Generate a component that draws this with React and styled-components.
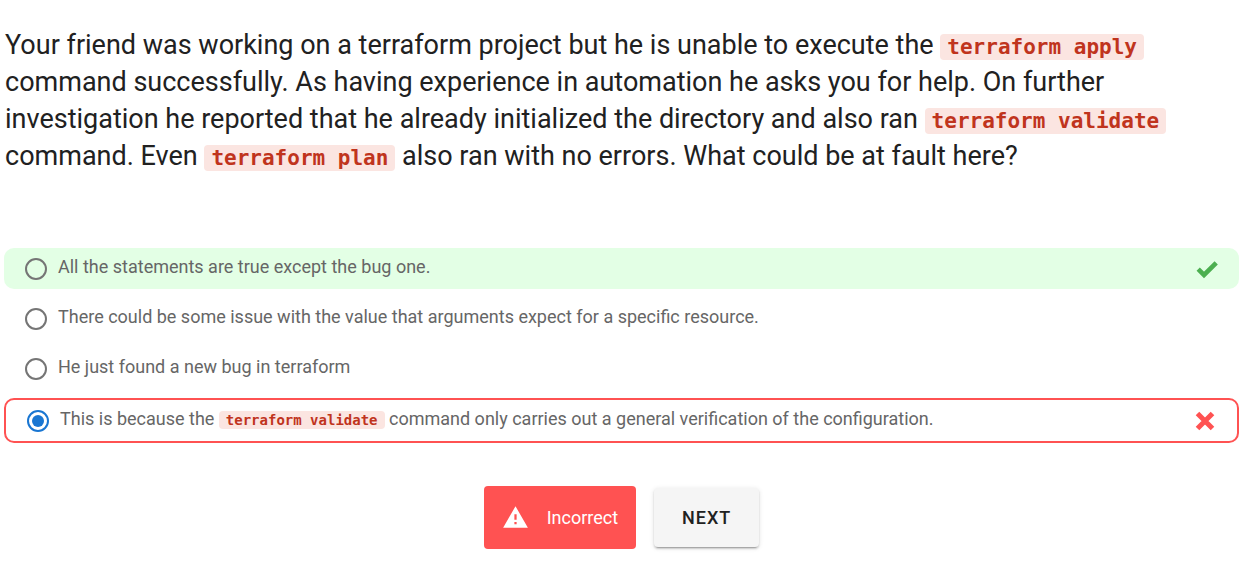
import React, { useState } from "react";
import styled, { createGlobalStyle } from "styled-components";

const GlobalStyle = createGlobalStyle`
  *, *::before, *::after { box-sizing: border-box; }
  body {
    margin: 0;
    background: #fff;
    color: #212121;
    font-family: Roboto, "Liberation Sans", sans-serif;
  }
`;

const Page = styled.main`
  padding: 27px 12px 32px 4px;
`;

const Question = styled.h1`
  margin: 0 0 73px;
  padding: 0 48px 0 1px;
  font-size: 27px;
  font-weight: 400;
  line-height: 37px;
`;

const Code = styled.code`
  padding: 1px 7px;
  border-radius: 4px;
  background: #fbe5e1;
  color: #c0341d;
  font-family: "DejaVu Sans Mono", monospace;
  font-size: ${(p) => (p.$small ? "14px" : "21px")};
  font-weight: 700;
  line-height: 1;
`;

const Options = styled.fieldset`
  display: flex;
  flex-direction: column;
  gap: 9px;
  margin: 0;
  padding: 0;
  border: 0;
`;

const Option = styled.label`
  display: flex;
  align-items: center;
  gap: 11px;
  min-height: 41px;
  padding: 0 21px;
  border-radius: 10px;
  color: #666;
  font-size: 18px;
  line-height: 24px;
  background: ${(p) => (p.$state === "correct" ? "#e3ffe5" : "transparent")};
  ${(p) => p.$state === "wrong" && "border: 2px solid #ff5252; min-height: 45px;"}
`;

const Radio = styled.input`
  appearance: none;
  flex: none;
  display: grid;
  place-content: center;
  width: 22px;
  height: 22px;
  margin: 0;
  border: 2px solid #757575;
  border-radius: 50%;
  &:checked { border-color: #1976d2; }
  &:checked::before {
    content: "";
    width: 12px;
    height: 12px;
    border-radius: 50%;
    background: #1976d2;
  }
`;

const OptionText = styled.span`
  flex: 1;
  padding-bottom: 4px;
`;

const Mark = styled.svg`
  flex: none;
  width: 22px;
  height: 22px;
`;

const Actions = styled.div`
  display: flex;
  justify-content: center;
  align-items: center;
  gap: 18px;
  margin-top: 43px;
`;

const Result = styled.div`
  display: flex;
  align-items: center;
  gap: 18px;
  height: 63px;
  padding: 0 18px;
  border-radius: 4px;
  background: #ff5252;
  color: #fff;
  font-size: 18px;
`;

const WarningIcon = styled.svg`
  width: 27px;
  height: 27px;
`;

const NextButton = styled.button`
  height: 59px;
  padding: 0 28px;
  border: 0;
  border-radius: 4px;
  background: #f5f5f5;
  color: #212121;
  font-family: inherit;
  font-size: 18px;
  font-weight: 500;
  letter-spacing: 1px;
  text-transform: uppercase;
  box-shadow: 0 3px 1px -2px rgba(0, 0, 0, 0.2), 0 2px 2px 0 rgba(0, 0, 0, 0.14),
    0 1px 5px 0 rgba(0, 0, 0, 0.12);
`;

const options = [
  { id: "all", text: "All the statements are true except the bug one.", state: "correct" },
  {
    id: "value",
    text: "There could be some issue with the value that arguments expect for a specific resource.",
  },
  { id: "bug", text: "He just found a new bug in terraform" },
  {
    id: "validate",
    text: (
      <>
        This is because the <Code $small>terraform validate</Code> command only carries out a
        general verification of the configuration.
      </>
    ),
    state: "wrong",
  },
];

const CheckMark = () => (
  <Mark viewBox="0 0 22 22" role="img" aria-label="Correct answer">
    <path d="M2.2 11.2 L8 17 L20.2 4.8" fill="none" stroke="#4caf50" strokeWidth="4.6" />
  </Mark>
);

const CrossMark = () => (
  <Mark viewBox="0 0 22 22" role="img" aria-label="Wrong answer">
    <path d="M3.5 3.5 L18.5 18.5 M18.5 3.5 L3.5 18.5" stroke="#ff5252" strokeWidth="5" />
  </Mark>
);

export default function App() {
  const [selected, setSelected] = useState("validate");
  return (
    <>
      <GlobalStyle />
      <Page>
        <Question id="question">
          Your friend was working on a terraform project but he is unable to execute the{" "}
          <Code>terraform apply</Code> command successfully. As having experience in automation he
          asks you for help. On further investigation he reported that he already initialized the
          directory and also ran <Code>terraform validate</Code> command. Even{" "}
          <Code>terraform plan</Code> also ran with no errors. What could be at fault here?
        </Question>
        <Options aria-labelledby="question">
          {options.map(({ id, text, state }) => (
            <Option key={id} $state={state}>
              <Radio
                type="radio"
                name="answer"
                value={id}
                checked={selected === id}
                onChange={() => setSelected(id)}
              />
              <OptionText>{text}</OptionText>
              {state === "correct" && <CheckMark />}
              {state === "wrong" && <CrossMark />}
            </Option>
          ))}
        </Options>
        <Actions>
          <Result role="status">
            <WarningIcon viewBox="0 0 24 24" fill="currentColor" aria-hidden="true">
              <path d="M13 14h-2V9h2m0 9h-2v-2h2M1 21h22L12 2 1 21z" />
            </WarningIcon>
            Incorrect
          </Result>
          <NextButton type="button">Next</NextButton>
        </Actions>
      </Page>
    </>
  );
}
